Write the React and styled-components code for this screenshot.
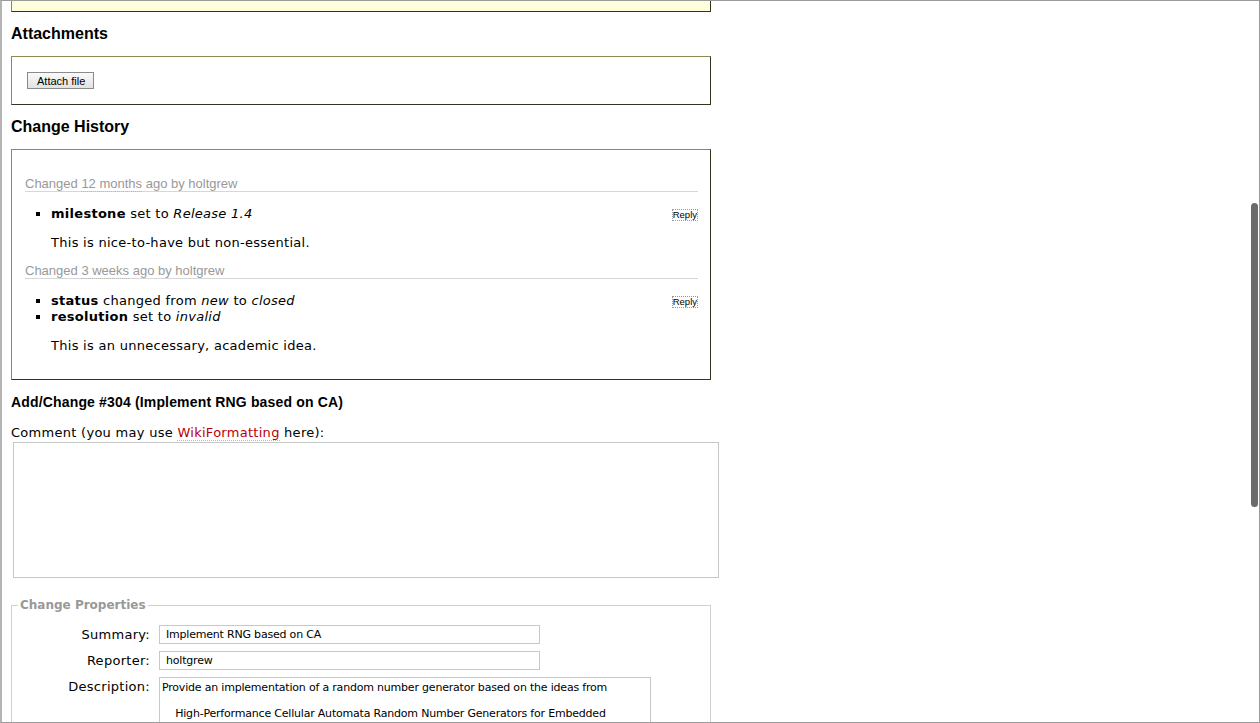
import styled, { createGlobalStyle } from 'styled-components'

const GlobalStyle = createGlobalStyle`
  html, body {
    margin: 0;
    padding: 0;
    background: #fff;
    overflow: hidden;
  }
  body {
    font: 13px 'DejaVu Sans', Verdana, sans-serif;
    letter-spacing: 0.28px;
    color: #000;
  }
`

const Frame = styled.div`
  position: relative;
  box-sizing: border-box;
  width: 1260px;
  height: 723px;
  overflow: hidden;
  border: 1px solid #9a9a9a;
  border-left: 2px solid #b4b4b4;
  padding-left: 9px;
`

const Scrollbar = styled.div`
  position: absolute;
  right: 1px;
  top: 202px;
  width: 7px;
  height: 304px;
  border-radius: 4px;
  background: #6b6b6b;
`

const outset = `
  border: 1px solid;
  border-color: #8a8a52 #34341f #34341f #8a8a52;
`

const TicketTail = styled.div`
  box-sizing: border-box;
  width: 700px;
  height: 11px;
  background: #ffffdd;
  ${outset}
  border-top: none;
`

const SectionTitle = styled.h2`
  font: bold 16px/19px 'Liberation Sans', Arial, sans-serif;
  letter-spacing: 0;
  margin: 12px 0 13px;
`

const Box = styled.div`
  box-sizing: border-box;
  width: 700px;
  ${outset}
  padding: ${(p) => p.$pad};
`

const Button = styled.button`
  height: 17px;
  padding: 0 8px 0 9px;
  font: 11px 'Liberation Sans', Arial, sans-serif;
  color: #000;
  background: linear-gradient(#fafafa, #e2e2e2);
  border: 1px solid #8a8a8a;
  border-radius: 0;
  display: block;
`

const Change = styled.div`
  margin-top: 27px;
  & + & {
    margin-top: 13px;
  }
`

const ChangeHeading = styled.h3`
  font: normal 13px/14px 'Liberation Sans', Arial, sans-serif;
  letter-spacing: 0;
  color: #999;
  margin: 0;
  border-bottom: 1px solid #d7d7d7;
`

const Dotted = styled.span`
  border-bottom: 1px dotted #bbb;
`

const Fields = styled.ul`
  margin: 14px 0 0;
  padding-left: 26px;
  list-style: square;
  line-height: 16px;
`

const Reply = styled.button`
  float: right;
  margin-top: 3px;
  height: 12px;
  padding: 0;
  font: 9.5px/10px 'Liberation Sans', Arial, sans-serif;
  letter-spacing: 0;
  color: #000;
  background: #fff;
  border: 1px dotted #999;
`

const Comment = styled.p`
  margin: 13px 0 0 26px;
  line-height: 16px;
`

const FormTitle = styled.h3`
  font: bold 14px/17px 'Liberation Sans', Arial, sans-serif;
  letter-spacing: 0.16px;
  margin: 14px 0 0;
`

const FieldLabel = styled.div`
  margin-top: 14px;
  line-height: 16px;
`

const WikiLink = styled.a`
  color: #bb0000;
  text-decoration: none;
  border-bottom: 1px dotted #bbb;
`

const CommentArea = styled.textarea`
  display: block;
  box-sizing: border-box;
  margin: 1px 0 0 2px;
  width: 706px;
  height: 136px;
  border: 1px solid #c8c8c8;
  resize: none;
`

const Properties = styled.fieldset`
  box-sizing: border-box;
  width: 700px;
  min-width: 0;
  margin: 20px 0 0;
  padding: 13px 10px 0;
  border: 1px solid #d0d0d0;
`

const Legend = styled.legend`
  margin-left: -4px;
  padding: 0 2px;
  font: bold 12px/14px 'DejaVu Sans', Verdana, sans-serif;
  letter-spacing: 0;
  color: #999;
`

const PropGrid = styled.div`
  display: grid;
  grid-template-columns: 128px auto;
  column-gap: 9px;
  row-gap: 7px;
  align-items: center;
  justify-items: start;
`

const PropLabel = styled.label`
  justify-self: end;
  line-height: 16px;
  align-self: ${(p) => (p.$top ? 'start' : 'center')};
  margin-top: ${(p) => (p.$top ? '2px' : '1px')};
`

const TextInput = styled.input`
  box-sizing: border-box;
  width: 381px;
  height: 19px;
  padding: 0 6px;
  border: 1px solid #c8c8c8;
  font: 11px 'DejaVu Sans', Verdana, sans-serif;
  letter-spacing: -0.2px;
  color: #000;
`

const DescArea = styled.textarea`
  box-sizing: border-box;
  width: 492px;
  height: 130px;
  padding: 3px 2px;
  border: 1px solid #c8c8c8;
  font: 11px/13px 'DejaVu Sans', Verdana, sans-serif;
  letter-spacing: -0.2px;
  color: #000;
  resize: none;
  overflow: hidden;
`

const changes = [
  {
    when: '12 months',
    fields: [
      <>
        <b>milestone</b> set to <i>Release 1.4</i>
      </>,
    ],
    comment: 'This is nice-to-have but non-essential.',
  },
  {
    when: '3 weeks',
    fields: [
      <>
        <b>status</b> changed from <i>new</i> to <i>closed</i>
      </>,
      <>
        <b>resolution</b> set to <i>invalid</i>
      </>,
    ],
    comment: 'This is an unnecessary, academic idea.',
  },
]

const description =
  'Provide an implementation of a random number generator based on the ideas from\n\n' +
  '    High-Performance Cellular Automata Random Number Generators for Embedded\n' +
  '    Probabilistic Computing Systems, Shackleford et al.'

export default function App() {
  return (
    <Frame>
      <GlobalStyle />
      <TicketTail />

      <SectionTitle>Attachments</SectionTitle>
      <Box $pad="15px 15px 15px">
        <Button>Attach file</Button>
      </Box>

      <SectionTitle>Change History</SectionTitle>
      <Box $pad="0 12px 25px 13px">
        {changes.map((c) => (
          <Change key={c.when}>
            <ChangeHeading>
              Changed <Dotted>{c.when}</Dotted> ago by holtgrew
            </ChangeHeading>
            <Fields>
              {c.fields.map((f, i) => (
                <li key={i}>
                  {i === 0 && <Reply>Reply</Reply>}
                  {f}
                </li>
              ))}
            </Fields>
            <Comment>{c.comment}</Comment>
          </Change>
        ))}
      </Box>

      <FormTitle>Add/Change #304 (Implement RNG based on CA)</FormTitle>
      <FieldLabel>
        Comment (you may use <WikiLink href="#">WikiFormatting</WikiLink> here):
      </FieldLabel>
      <CommentArea />

      <Properties>
        <Legend>Change Properties</Legend>
        <PropGrid>
          <PropLabel>Summary:</PropLabel>
          <TextInput defaultValue="Implement RNG based on CA" />
          <PropLabel>Reporter:</PropLabel>
          <TextInput defaultValue="holtgrew" />
          <PropLabel $top>Description:</PropLabel>
          <DescArea defaultValue={description} />
        </PropGrid>
      </Properties>

      <Scrollbar />
    </Frame>
  )
}
